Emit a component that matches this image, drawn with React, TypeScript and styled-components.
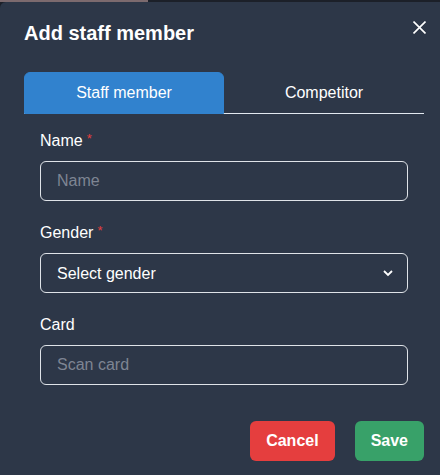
import React from "react";
import styled, { createGlobalStyle } from "styled-components";

const Global = createGlobalStyle`
  html, body { margin: 0; padding: 0; }
  body {
    background: #1c2029;
    font-family: "Liberation Sans", Arial, sans-serif;
    overflow: hidden;
  }
  * { box-sizing: border-box; }
`;

const Page = styled.div`
  width: 440px;
  height: 475px;
  overflow: hidden;
  background: #1c2029;
`;

const Backdrop = styled.div`
  display: flex;
  height: 2px;
`;

const BackdropPart = styled.div<{ $w?: number; $color: string }>`
  ${(p) => (p.$w ? `width: ${p.$w}px;` : "flex: 1;")}
  background: ${(p) => p.$color};
`;

const Modal = styled.section`
  position: relative;
  width: 448px;
  background: #2d3748;
  color: #ffffff;
  border-radius: 6px 6px 0 0;
  height: 473px;
`;

const Header = styled.header`
  padding: 16px 24px;
  font-size: 20px;
  font-weight: 700;
  line-height: 30px;
`;

const CloseButton = styled.button`
  position: absolute;
  top: 9px;
  right: 13px;
  width: 32px;
  height: 32px;
  display: flex;
  align-items: center;
  justify-content: center;
  background: transparent;
  border: none;
  padding: 0;
  color: #ffffff;
`;

const Body = styled.div`
  padding: 8px 24px;
`;

const TabList = styled.div`
  display: flex;
  border-bottom: 1px solid #e2e8f0;
`;

const Tab = styled.button<{ $active?: boolean }>`
  flex: 1;
  padding: 8px 16px;
  margin-bottom: -1px;
  font-family: inherit;
  font-size: 16px;
  line-height: 24px;
  color: #ffffff;
  background: ${(p) => (p.$active ? "#3182ce" : "transparent")};
  border: 1px solid ${(p) => (p.$active ? "#3182ce" : "transparent")};
  border-radius: 6px 6px 0 0;
`;

const Panel = styled.div`
  padding: 15px 16px 16px;
  display: grid;
  gap: 20px;
`;

const Field = styled.div`
  display: flex;
  flex-direction: column;
`;

const Label = styled.label`
  font-size: 16px;
  line-height: 24px;
  height: 24px;
  margin-bottom: 8px;
  color: #ffffff;
`;

const Required = styled.span`
  position: relative;
  top: -3px;
  color: #e53e3e;
  margin-left: 4px;
  font-size: 13px;
  line-height: 0;
`;

const Input = styled.input`
  height: 40px;
  width: 100%;
  padding: 0 16px;
  font-family: inherit;
  font-size: 16px;
  color: #ffffff;
  background: transparent;
  border: 1px solid #dfe3e8;
  border-radius: 6px;
  outline: none;
  &::placeholder { color: #7e8593; }
`;

const SelectWrap = styled.div`
  position: relative;
  height: 40px;
`;

const Select = styled.select`
  appearance: none;
  height: 40px;
  width: 100%;
  padding: 0 32px 0 16px;
  font-family: inherit;
  font-size: 16px;
  color: #ffffff;
  background: transparent;
  border: 1px solid #dfe3e8;
  border-radius: 6px;
  outline: none;
`;

const SelectIcon = styled.span`
  position: absolute;
  right: 8px;
  top: 0;
  width: 24px;
  height: 40px;
  display: flex;
  align-items: center;
  justify-content: center;
  pointer-events: none;
  color: #ffffff;
`;

const Footer = styled.footer`
  display: flex;
  justify-content: flex-end;
  gap: 20px;
  padding: 12px 24px 16px;
`;

const Button = styled.button<{ $variant: "red" | "green" }>`
  height: 40px;
  padding: 0 16px;
  font-family: inherit;
  font-size: 16px;
  font-weight: 700;
  color: #ffffff;
  border: none;
  border-radius: 6px;
  background: ${(p) => (p.$variant === "red" ? "#e53e3e" : "#38a169")};
`;

export default function App() {
  return (
    <>
      <Global />
      <Page>
        <Backdrop>
          <BackdropPart $w={148} $color="#7c6a6e" />
          <BackdropPart $color="#1c2029" />
        </Backdrop>
        <Modal>
          <Header>Add staff member</Header>
          <CloseButton aria-label="Close">
            <svg width="13" height="13" viewBox="0 0 24 24">
              <path
                d="M2 2 L22 22 M22 2 L2 22"
                stroke="currentColor"
                strokeWidth="3"
                strokeLinecap="square"
                fill="none"
              />
            </svg>
          </CloseButton>
          <Body>
            <TabList>
              <Tab $active>Staff member</Tab>
              <Tab>Competitor</Tab>
            </TabList>
            <Panel>
              <Field>
                <Label>
                  Name<Required>*</Required>
                </Label>
                <Input placeholder="Name" />
              </Field>
              <Field>
                <Label>
                  Gender<Required>*</Required>
                </Label>
                <SelectWrap>
                  <Select defaultValue="">
                    <option value="">Select gender</option>
                    <option value="m">Male</option>
                    <option value="f">Female</option>
                  </Select>
                  <SelectIcon>
                    <svg width="12" height="8" viewBox="0 0 12 8">
                      <path
                        d="M2 2 L6 6 L10 2"
                        stroke="currentColor"
                        strokeWidth="1.8"
                        fill="none"
                      />
                    </svg>
                  </SelectIcon>
                </SelectWrap>
              </Field>
              <Field>
                <Label>Card</Label>
                <Input placeholder="Scan card" />
              </Field>
            </Panel>
          </Body>
          <Footer>
            <Button $variant="red">Cancel</Button>
            <Button $variant="green">Save</Button>
          </Footer>
        </Modal>
      </Page>
    </>
  );
}
